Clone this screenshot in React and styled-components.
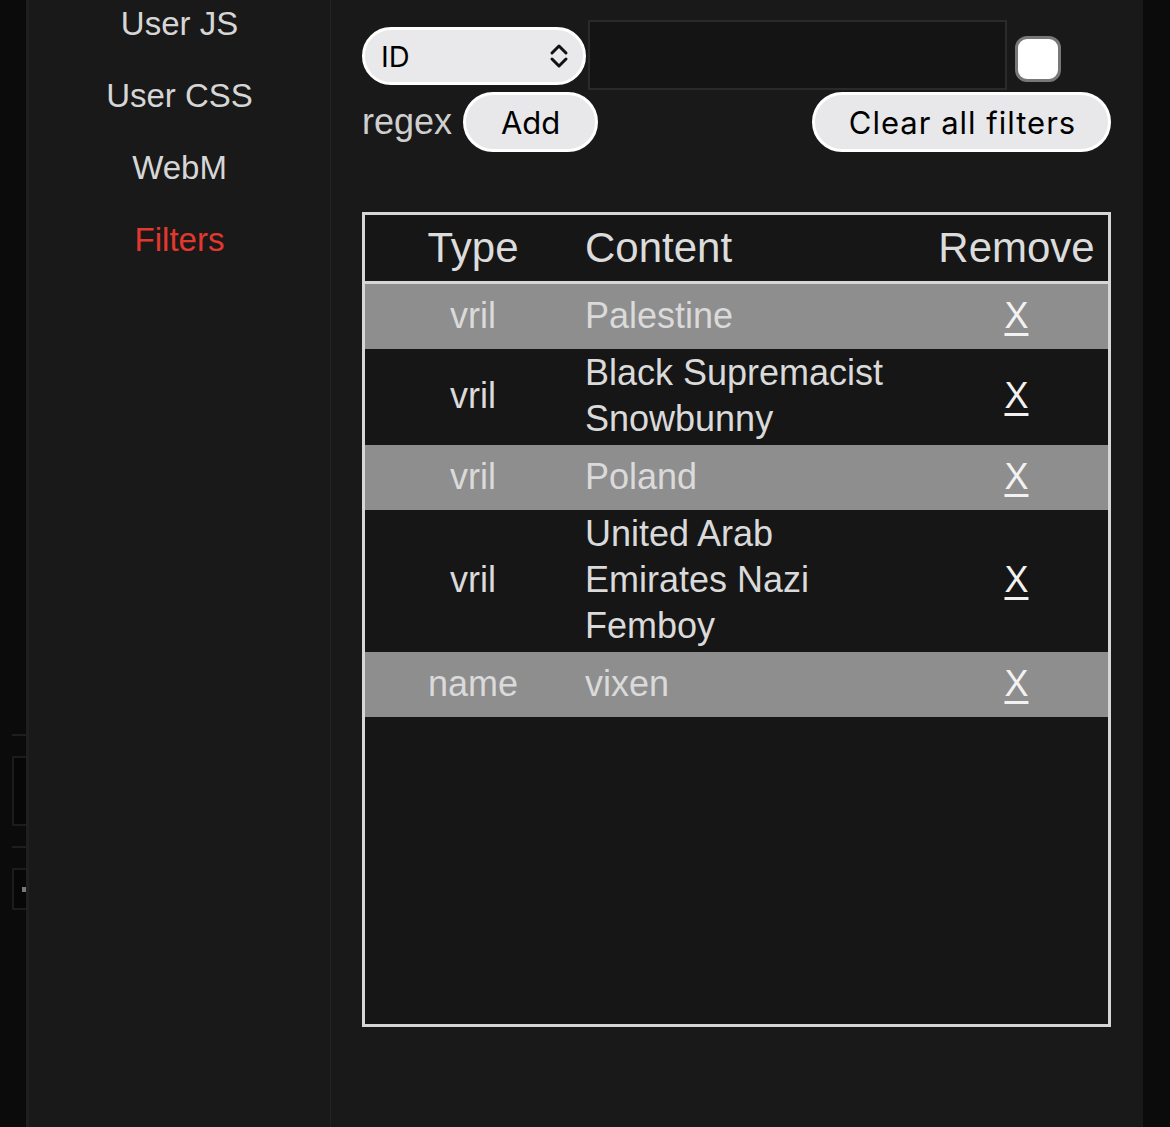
import styled, { createGlobalStyle } from "styled-components";

const GlobalStyle = createGlobalStyle`
  html, body {
    margin: 0;
    padding: 0;
    background: #0b0b0b;
    font-family: "Liberation Sans", Arial, sans-serif;
  }
`;

const filters = [
  { type: "vril", content: "Palestine" },
  { type: "vril", content: "Black Supremacist Snowbunny" },
  { type: "vril", content: "Poland" },
  { type: "vril", content: "United Arab Emirates Nazi Femboy" },
  { type: "name", content: "vixen" },
];

const navItems = ["User JS", "User CSS", "WebM", "Filters"];

export default function App() {
  return (
    <>
      <GlobalStyle />
      <BackPage>
        <BackRule />
        <BackBox />
        <BackRule />
        <BackBox small>
          <BackDot />
        </BackBox>
      </BackPage>
      <Modal>
        <Sidebar>
          <Nav>
            {navItems.map((item) => (
              <NavItem key={item} active={item === "Filters"}>
                {item}
              </NavItem>
            ))}
          </Nav>
        </Sidebar>
        <Main>
          <ControlRow>
            <SelectWrap>
              <span>ID</span>
              <svg width="20" height="26" viewBox="0 0 20 26" fill="none">
                <path
                  d="M3 10 L10 3 L17 10"
                  stroke="#111"
                  strokeWidth="3"
                  strokeLinecap="round"
                  strokeLinejoin="round"
                />
                <path
                  d="M3 16 L10 23 L17 16"
                  stroke="#111"
                  strokeWidth="3"
                  strokeLinecap="round"
                  strokeLinejoin="round"
                />
              </svg>
            </SelectWrap>
            <TextInput type="text" />
            <Checkbox />
          </ControlRow>
          <ActionRow>
            <Label>regex</Label>
            <PillButton>Add</PillButton>
            <PillButton wide>Clear all filters</PillButton>
          </ActionRow>
          <TableBox>
            <FilterTable>
              <colgroup>
                <col style={{ width: 216 }} />
                <col style={{ width: 344 }} />
                <col />
              </colgroup>
              <thead>
                <tr>
                  <Th>Type</Th>
                  <Th align="left">Content</Th>
                  <Th>Remove</Th>
                </tr>
              </thead>
              <tbody>
                {filters.map((f, i) => (
                  <Row key={i} shaded={i % 2 === 0}>
                    <Td>{f.type}</Td>
                    <Td align="left">{f.content}</Td>
                    <Td>
                      <RemoveLink href="#">X</RemoveLink>
                    </Td>
                  </Row>
                ))}
              </tbody>
            </FilterTable>
          </TableBox>
        </Main>
      </Modal>
    </>
  );
}

const BackPage = styled.div`
  padding: 734px 0 0 12px;
  display: flex;
  flex-direction: column;
  gap: 20px;
`;

const BackRule = styled.div`
  width: 40px;
  height: 2px;
  background: #1e1e1e;
`;

const BackBox = styled.div`
  width: 40px;
  height: ${(p) => (p.small ? 42 : 70)}px;
  border: 2px solid #1c1c1c;
  background: #070707;
  display: flex;
  align-items: center;
  padding-left: 8px;
  box-sizing: border-box;
`;

const BackDot = styled.div`
  width: 5px;
  height: 5px;
  background: #777;
`;

const Modal = styled.div`
  position: fixed;
  top: 0;
  bottom: 0;
  left: 26px;
  width: 1117px;
  background: #191919;
  border-left: 3px solid #1f1f1f;
  box-sizing: border-box;
  display: flex;
  overflow: hidden;
`;

const Sidebar = styled.aside`
  width: 301px;
  flex-shrink: 0;
  border-right: 1px solid #222;
`;

const Nav = styled.nav`
  margin-top: -12px;
  display: flex;
  flex-direction: column;
  align-items: center;
`;

const NavItem = styled.div`
  font-size: 33px;
  line-height: 72px;
  color: ${(p) => (p.active ? "#e2382d" : "#d6d6d6")};
`;

const Main = styled.main`
  flex: 1;
  padding: 20px 32px 0 31px;
`;

const ControlRow = styled.div`
  display: flex;
  align-items: flex-start;
`;

const SelectWrap = styled.div`
  margin-top: 7px;
  width: 224px;
  height: 58px;
  box-sizing: border-box;
  border: 3px solid #fff;
  border-radius: 29px;
  background: #e9e9eb;
  display: flex;
  align-items: center;
  justify-content: space-between;
  padding: 0 14px 0 16px;
  font-family: Inter, "Liberation Sans", sans-serif;
  font-size: 29px;
  color: #000;
`;

const TextInput = styled.input`
  margin-left: 2px;
  width: 419px;
  height: 70px;
  box-sizing: border-box;
  border: 2px solid #2a2a2a;
  background: #141414;
  outline: none;
  color: #ddd;
`;

const Checkbox = styled.div`
  margin: 16px 0 0 8px;
  width: 46px;
  height: 46px;
  box-sizing: border-box;
  border: 3px solid #787878;
  border-radius: 12px;
  background: #fff;
`;

const ActionRow = styled.div`
  margin-top: 2px;
  display: flex;
  align-items: center;
  gap: 11px;
`;

const Label = styled.span`
  font-size: 36px;
  color: #cfcfcf;
`;

const PillButton = styled.button`
  height: 60px;
  width: ${(p) => (p.wide ? 299 : 135)}px;
  margin-left: ${(p) => (p.wide ? "auto" : "0")};
  box-sizing: border-box;
  border: 3px solid #fff;
  border-radius: 30px;
  background: #e8e8ea;
  font-family: Inter, "Liberation Sans", sans-serif;
  font-size: 31px;
  letter-spacing: ${(p) => (p.wide ? "1px" : "0")};
  color: #000;
  padding: 0 0 0 ${(p) => (p.wide ? "2px" : "0")};
  cursor: pointer;
`;

const TableBox = styled.div`
  margin-top: 60px;
  height: 815px;
  box-sizing: border-box;
  border: 3px solid #d6d6d6;
  background: #161616;
`;

const FilterTable = styled.table`
  width: 100%;
  table-layout: fixed;
  border-collapse: separate;
  border-spacing: 0;
`;

const Th = styled.th`
  height: 66px;
  padding: 0 0 0 ${(p) => (p.align === "left" ? "4px" : "0")};
  border-bottom: 3px solid #d6d6d6;
  font-size: 42px;
  font-weight: normal;
  color: #dcdcdc;
  text-align: ${(p) => p.align || "center"};
  vertical-align: middle;
`;

const Row = styled.tr`
  height: 65px;
  background: ${(p) => (p.shaded ? "#8e8e8e" : "#161616")};
`;

const Td = styled.td`
  padding: ${(p) => (p.align === "left" ? "1px 14px 3px 4px" : "1px 0 3px")};
  font-size: 36px;
  line-height: 46px;
  color: #dadada;
  text-align: ${(p) => p.align || "center"};
  vertical-align: middle;
`;

const RemoveLink = styled.a`
  color: #f2f2f2;
  text-decoration: underline;
  text-underline-offset: 5px;
  text-decoration-thickness: 3px;
`;
